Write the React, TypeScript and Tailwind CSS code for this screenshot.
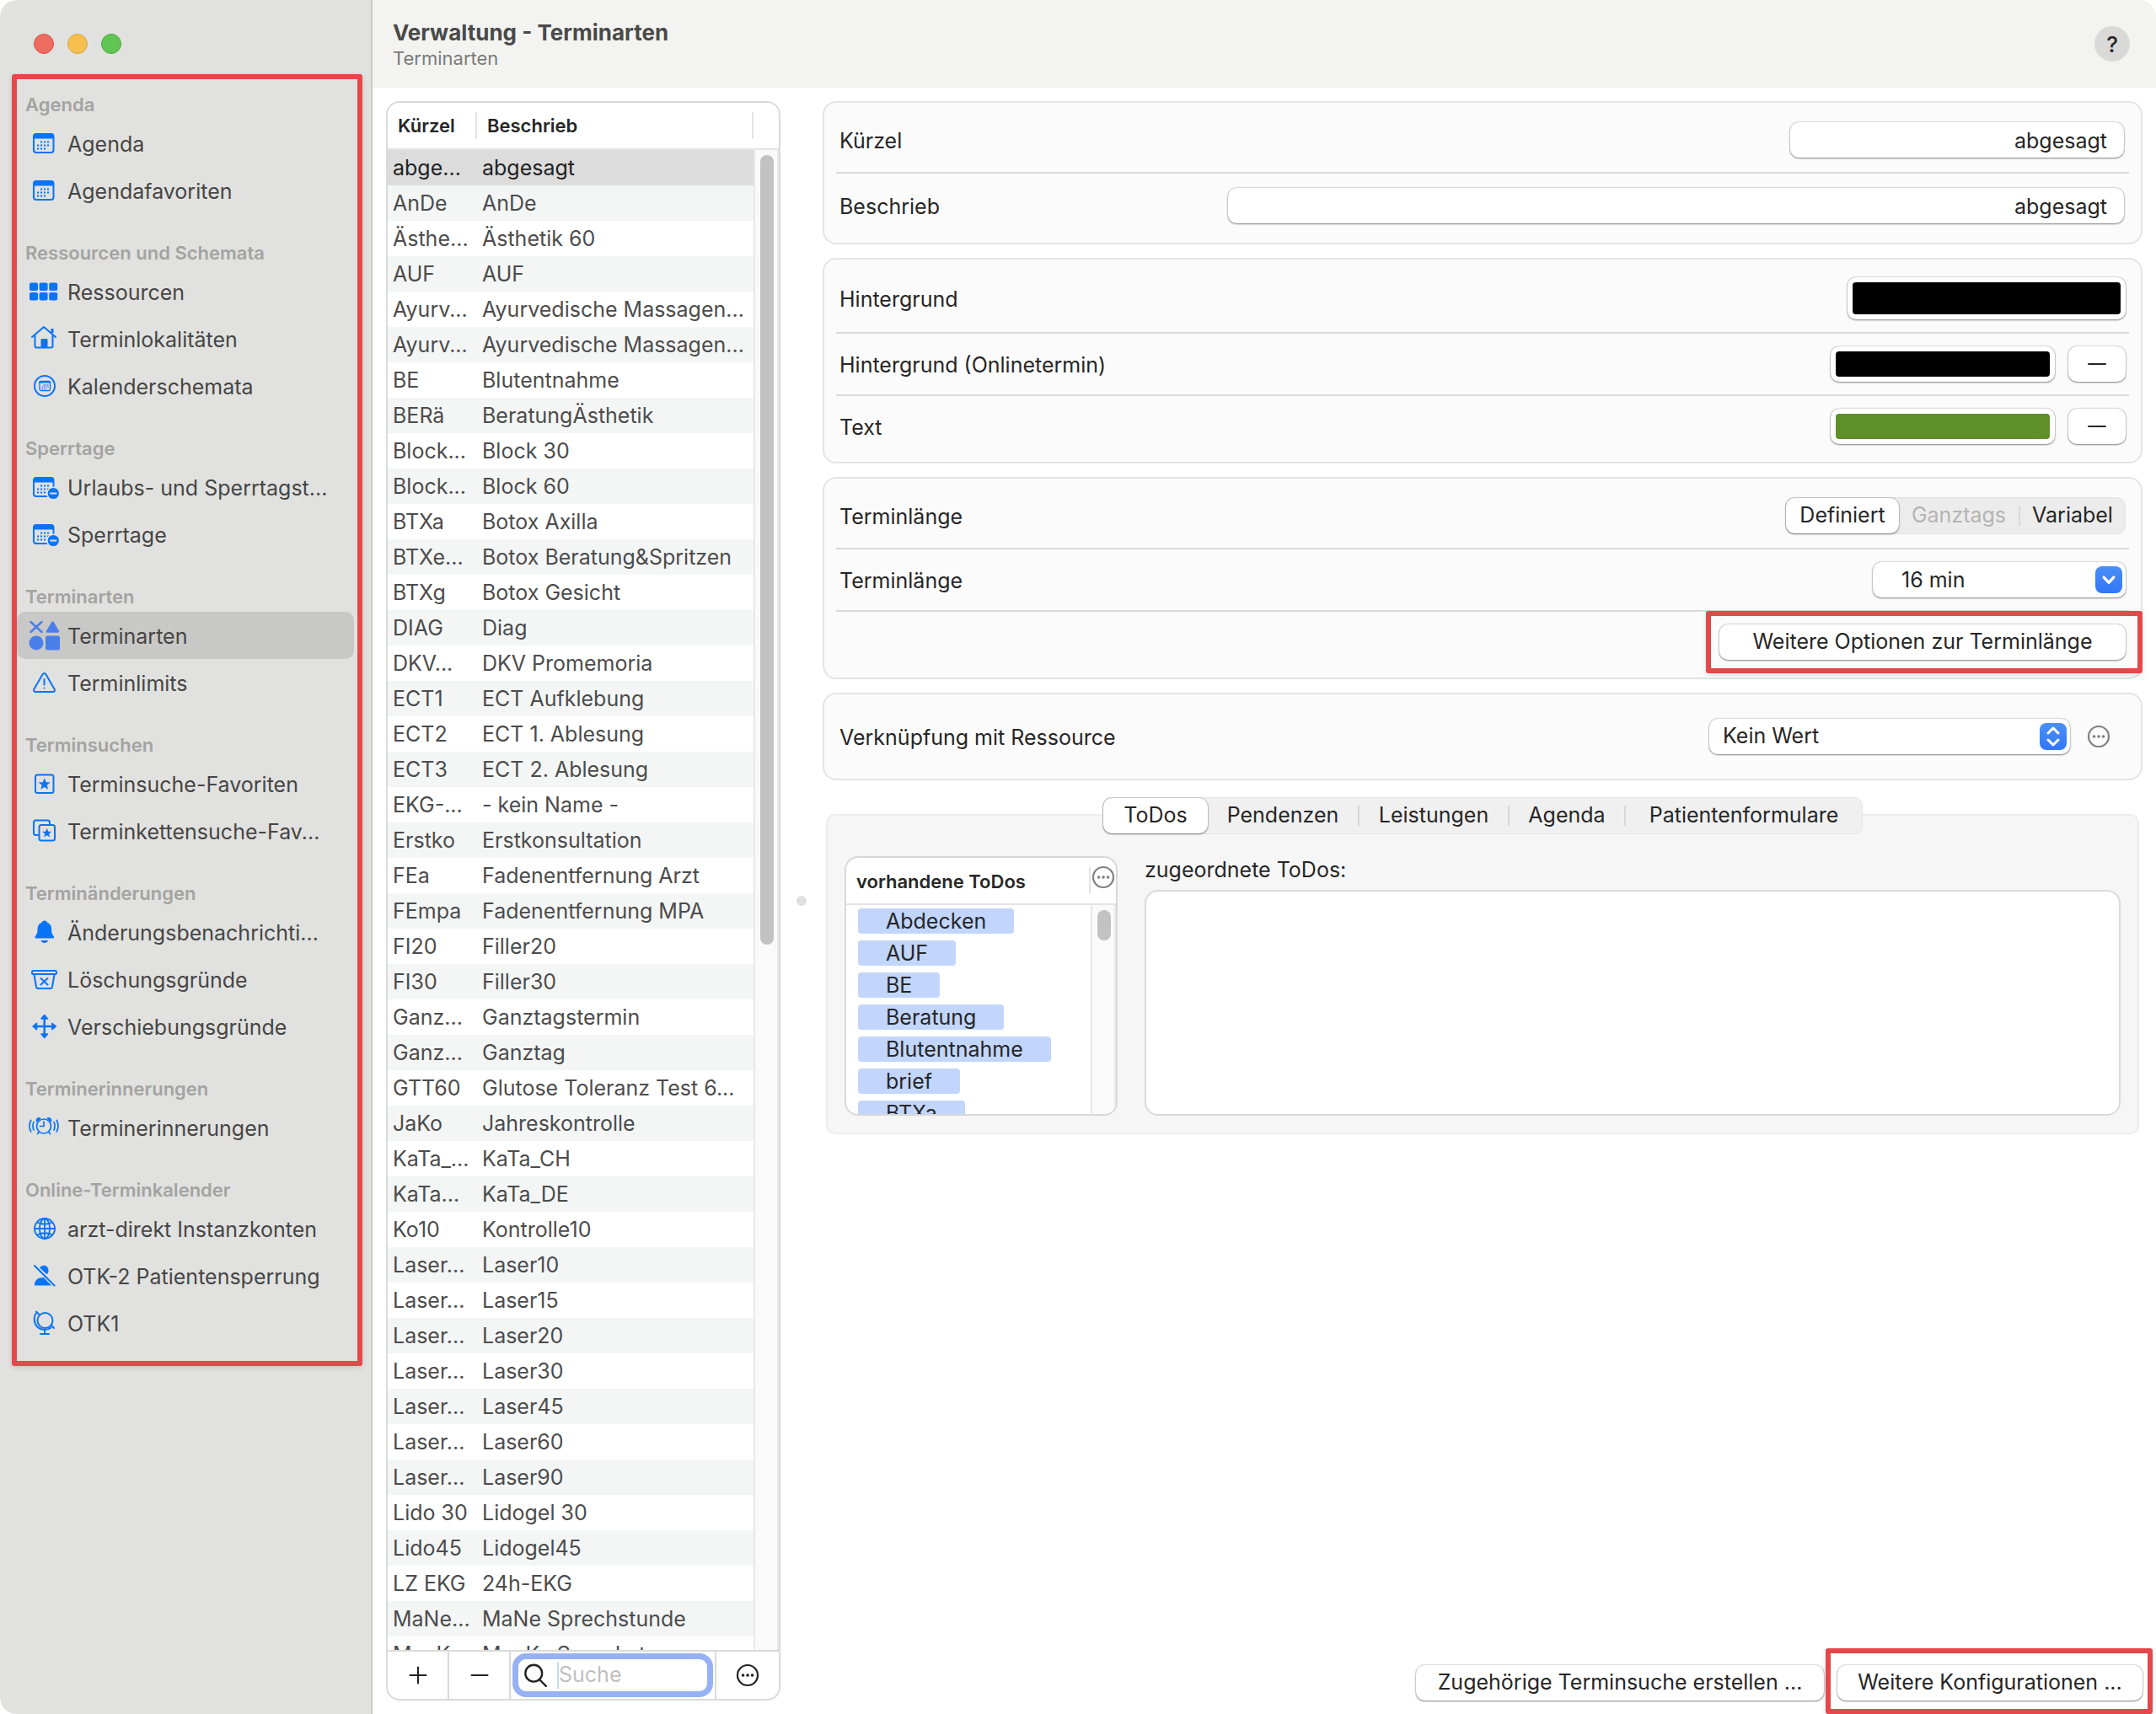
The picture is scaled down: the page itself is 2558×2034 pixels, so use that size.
import { useState, type ReactNode } from 'react'

const svgProps = {
	viewBox: '0 0 36 36',
	className: 'w-9 h-9 shrink-0',
	fill: 'none',
	stroke: 'currentColor',
	strokeWidth: 2,
	strokeLinecap: 'round',
	strokeLinejoin: 'round',
	'aria-hidden': true,
} as const

const CalendarBody = () => (
	<>
		<rect x="6" y="7" width="23.5" height="22" rx="3" />
		<path d="M6 12.5V9.5a3 3 0 0 1 3-3h17.5a3 3 0 0 1 3 3v3z" fill="currentColor" stroke="none" />
		<path d="M15 16.5h.1M19 16.5h.1M23 16.5h.1M11 20.5h.1M15 20.5h.1M19 20.5h.1M23 20.5h.1M11 24.5h.1M15 24.5h.1M19 24.5h.1" strokeWidth="2" strokeLinecap="square" />
	</>
)

const CalendarIcon = () => (
	<svg {...svgProps}>
		<CalendarBody />
	</svg>
)

const CalendarMinusIcon = () => (
	<svg {...svgProps}>
		<CalendarBody />
		<circle cx="29" cy="25.500" r="8" fill="#e1e1df" stroke="none" />
		<circle cx="29.3" cy="25.500" r="6.6" fill="currentColor" stroke="none" />
		<path d="M26 25.500h6.6" stroke="#e1e1df" />
	</svg>
)

const GridIcon = () => (
	<svg {...svgProps} fill="currentColor" stroke="none">
		<rect x="1" y="7.5" width="10" height="9.5" rx="2" />
		<rect x="12.6" y="7.5" width="10" height="9.5" rx="2" />
		<rect x="24.2" y="7.5" width="10" height="9.5" rx="2" />
		<rect x="1" y="19" width="10" height="9.5" rx="2" />
		<rect x="12.6" y="19" width="10" height="9.5" rx="2" />
		<rect x="24.2" y="19" width="10" height="9.5" rx="2" />
	</svg>
)

const HouseIcon = () => (
	<svg {...svgProps}>
		<path d="M4 16 18 4l14 12" />
		<path d="M7.5 14v12.500a2 2 0 0 0 2 2h17a2 2 0 0 0 2-2V14" />
		<path d="M28 6v5" strokeWidth="3" strokeLinecap="butt" />
		<path d="M15 28v-9.500h7V28z" fill="currentColor" strokeWidth="1" />
	</svg>
)

const CalendarCircleIcon = () => (
	<svg {...svgProps}>
		<circle cx="19" cy="18" r="12" />
		<rect x="13" y="12.500" width="12.500" height="11" rx="1.500" strokeWidth="1.300" />
		<path d="M13 13.500h12.500" />
		<path d="M17.500 17h6M15.500 19.200h8M15.500 21.300h5.500" strokeWidth="1.300" strokeDasharray="1.300 1" strokeLinecap="butt" />
	</svg>
)

const ShapesIcon = () => (
	<svg {...svgProps} className="w-9 h-9 shrink-0 overflow-visible" stroke="#4a7fea" strokeWidth="2.500">
		<path d="M2.500 2l13 12M15.500 2l-13 12" />
		<path d="M28.500 2.500l6.500 11H22z" fill="#4a7fea" />
		<circle cx="9" cy="27" r="8.500" fill="#4a7fea" stroke="none" />
		<rect x="20" y="18.500" width="17" height="17" rx="2.500" fill="#4a7fea" stroke="none" />
	</svg>
)

const WarningIcon = () => (
	<svg {...svgProps}>
		<path d="M16.700 8 6.300 26a2 2 0 0 0 1.700 3h21a2 2 0 0 0 1.700-3L20.300 8a2.100 2.100 0 0 0-3.600 0z" />
		<path d="M18.500 14v6.500M18.500 24.500v.1" />
	</svg>
)

const STAR = 'M0-7.500 1.900-2.500 7.100-2.300 3 1 4.400 6.100 0 3.200-4.400 6.100-3 1-7.100-2.300-1.900-2.500z'

const StarSquareIcon = () => (
	<svg {...svgProps}>
		<rect x="8" y="7.500" width="21.500" height="21.500" rx="2.500" />
		<path d={STAR} transform="translate(18.700 18.700)" fill="currentColor" stroke="none" />
	</svg>
)

const StarStackIcon = () => (
	<svg {...svgProps}>
		<path d="M12 23H8.500A2.500 2.500 0 0 1 6 20.500V8a2.500 2.500 0 0 1 2.500-2.500h14A2.500 2.500 0 0 1 25 8v2" />
		<rect x="12.500" y="11" width="18.500" height="18.500" rx="2.500" />
		<path d={STAR} transform="translate(21.700 20.700) scale(.8)" fill="currentColor" stroke="none" />
	</svg>
)

const BellIcon = () => (
	<svg {...svgProps} fill="currentColor" stroke="none">
		<path d="M18.800 4.500c-1.800 0-2.900 1-3.300 2.300-3.400 1.300-5 4-5 7.700 0 5-.8 6.300-2.500 8.200-.8.900-.9 2.800.8 2.800h20c1.700 0 1.600-1.900.8-2.800-1.700-1.900-2.500-3.200-2.500-8.200 0-3.700-1.600-6.400-5-7.700-.4-1.300-1.500-2.300-3.300-2.300z" />
		<path d="M14.500 28h8.600c-.5 1.700-2 2.900-4.300 2.900S15 29.700 14.500 28z" />
	</svg>
)

const BasketIcon = () => (
	<svg {...svgProps}>
		<rect x="4" y="8" width="29" height="4" rx="1.500" />
		<path d="M6.500 12.500 9 27a2.500 2.500 0 0 0 2.500 2h14A2.500 2.500 0 0 0 28 27l2.500-14.500" />
		<path d="m14.500 17 8 7.500M22.500 17l-8 7.500" />
	</svg>
)

const MoveIcon = () => (
	<svg {...svgProps}>
		<path d="M18.700 7v22M7.500 18h22.500" strokeWidth="2.500" />
		<path d="M18.700 4.500 22.500 9h-7.600zM18.700 31.500 14.900 27h7.600zM5 18l4.500-3.800v7.600zM32.400 18l-4.500-3.800v7.600z" fill="currentColor" strokeWidth="1.500" />
	</svg>
)

const AlarmIcon = () => (
	<svg {...svgProps} strokeWidth="1.700">
		<circle cx="18" cy="16.500" r="8.500" />
		<path d="M18 11v5.500h-4.500M12.500 23l-2 2.500M23.500 23l2 2.500" />
		<path d="M9.500 10.500C9 8 11 6.500 13.500 7zM26.500 10.500c.5-2.500-1.500-4-4-3.500z" fill="currentColor" />
		<path d="M6 11.500c-1.300 3-1.300 6.500 0 9.500M2.700 9.500c-2.200 4.300-2.200 9 0 13.500M30 11.500c1.300 3 1.300 6.500 0 9.500M33.300 9.500c2.200 4.300 2.200 9 0 13.500" />
	</svg>
)

const GlobeIcon = () => (
	<svg {...svgProps} strokeWidth="1.800">
		<circle cx="19" cy="18" r="12" />
		<ellipse cx="19" cy="18" rx="6" ry="12" />
		<path d="M19 6v24M7 18h24M10 10.500c5 3 13 3 18 0M10 25.500c5-3 13-3 18 0" />
	</svg>
)

const PersonSlashIcon = () => (
	<svg {...svgProps}>
		<path d="M13 8.500c3-4.500 10-3 10.500 2.500.1 2.300-.5 4-1.800 5.300zM7 29.500c-.2-6.500 4-9.500 11-9.500l9 9.500z" fill="currentColor" stroke="none" />
		<path d="M7 6l23.500 23.500" />
	</svg>
)

const DeskGlobeIcon = () => (
	<svg {...svgProps}>
		<circle cx="19.500" cy="15" r="9" />
		<path d="M9.500 5.500c-4 5-3.500 12.500.5 16.700s11.500 5 16.500 1.300M9 4.500l3 3M27 20.500l3 3.500M19 26.500V31M14 31h10" />
	</svg>
)

const EllipsisCircleIcon = ({ className }: { className: string }) => (
	<svg viewBox="0 0 28 28" className={className} fill="none" stroke="currentColor" strokeWidth="2.200" aria-hidden>
		<circle cx="14" cy="14" r="12" />
		<path d="M8.500 14h.1M14 14h.1M19.500 14h.1" strokeWidth="3.600" strokeLinecap="round" />
	</svg>
)

const LineIcon = ({ d, className }: { d: string; className: string }) => (
	<svg viewBox="0 0 24 24" className={className} fill="none" stroke="currentColor" strokeWidth="2" strokeLinecap="round" strokeLinejoin="round" aria-hidden>
		<path d={d} />
	</svg>
)

const navGroups = [
	{
		title: 'Agenda',
		items: [
			{ label: 'Agenda', icon: <CalendarIcon /> },
			{ label: 'Agendafavoriten', icon: <CalendarIcon /> },
		],
	},
	{
		title: 'Ressourcen und Schemata',
		items: [
			{ label: 'Ressourcen', icon: <GridIcon /> },
			{ label: 'Terminlokalitäten', icon: <HouseIcon /> },
			{ label: 'Kalenderschemata', icon: <CalendarCircleIcon /> },
		],
	},
	{
		title: 'Sperrtage',
		items: [
			{ label: 'Urlaubs- und Sperrtagst...', icon: <CalendarMinusIcon /> },
			{ label: 'Sperrtage', icon: <CalendarMinusIcon /> },
		],
	},
	{
		title: 'Terminarten',
		items: [
			{ label: 'Terminarten', icon: <ShapesIcon />, selected: true },
			{ label: 'Terminlimits', icon: <WarningIcon /> },
		],
	},
	{
		title: 'Terminsuchen',
		items: [
			{ label: 'Terminsuche-Favoriten', icon: <StarSquareIcon /> },
			{ label: 'Terminkettensuche-Fav...', icon: <StarStackIcon /> },
		],
	},
	{
		title: 'Terminänderungen',
		items: [
			{ label: 'Änderungsbenachrichti...', icon: <BellIcon /> },
			{ label: 'Löschungsgründe', icon: <BasketIcon /> },
			{ label: 'Verschiebungsgründe', icon: <MoveIcon /> },
		],
	},
	{
		title: 'Terminerinnerungen',
		items: [{ label: 'Terminerinnerungen', icon: <AlarmIcon /> }],
	},
	{
		title: 'Online-Terminkalender',
		items: [
			{ label: 'arzt-direkt Instanzkonten', icon: <GlobeIcon /> },
			{ label: 'OTK-2 Patientensperrung', icon: <PersonSlashIcon /> },
			{ label: 'OTK1', icon: <DeskGlobeIcon /> },
		],
	},
]

const rows = [
	['abge...', 'abgesagt'],
	['AnDe', 'AnDe'],
	['Ästhe...', 'Ästhetik 60'],
	['AUF', 'AUF'],
	['Ayurv...', 'Ayurvedische Massagen...'],
	['Ayurv...', 'Ayurvedische Massagen...'],
	['BE', 'Blutentnahme'],
	['BERä', 'BeratungÄsthetik'],
	['Block...', 'Block 30'],
	['Block...', 'Block 60'],
	['BTXa', 'Botox Axilla'],
	['BTXe...', 'Botox Beratung&Spritzen'],
	['BTXg', 'Botox Gesicht'],
	['DIAG', 'Diag'],
	['DKV...', 'DKV Promemoria'],
	['ECT1', 'ECT Aufklebung'],
	['ECT2', 'ECT 1. Ablesung'],
	['ECT3', 'ECT 2. Ablesung'],
	['EKG-...', '- kein Name -'],
	['Erstko', 'Erstkonsultation'],
	['FEa', 'Fadenentfernung Arzt'],
	['FEmpa', 'Fadenentfernung MPA'],
	['FI20', 'Filler20'],
	['FI30', 'Filler30'],
	['Ganz...', 'Ganztagstermin'],
	['Ganz...', 'Ganztag'],
	['GTT60', 'Glutose Toleranz Test 6...'],
	['JaKo', 'Jahreskontrolle'],
	['KaTa_...', 'KaTa_CH'],
	['KaTa...', 'KaTa_DE'],
	['Ko10', 'Kontrolle10'],
	['Laser...', 'Laser10'],
	['Laser...', 'Laser15'],
	['Laser...', 'Laser20'],
	['Laser...', 'Laser30'],
	['Laser...', 'Laser45'],
	['Laser...', 'Laser60'],
	['Laser...', 'Laser90'],
	['Lido 30', 'Lidogel 30'],
	['Lido45', 'Lidogel45'],
	['LZ EKG', '24h-EKG'],
	['MaNe...', 'MaNe Sprechstunde'],
	['ManK...', 'ManKe Sprechst.'],
]

const todos = ['Abdecken', 'AUF', 'BE', 'Beratung', 'Blutentnahme', 'brief', 'BTXa']

const tabs = [
	{ label: 'ToDos', className: 'w-[124px]' },
	{ label: 'Pendenzen', className: 'w-[180px]' },
	{ label: 'Leistungen', className: 'w-[178px]' },
	{ label: 'Agenda', className: 'w-[138px]' },
	{ label: 'Patientenformulare', className: 'w-[280px]' },
]

const control = 'h-[42px] rounded-[10px] bg-white shadow-[0_0_2px_rgba(0,0,0,0.4),0_1px_2px_rgba(0,0,0,0.4)]'

const highlight = 'border-[6px] border-[#e5484a] rounded-[3px] shadow-[0_2px_6px_rgba(0,0,0,0.12)]'

const Panel = ({ children }: { children: ReactNode }) => (
	<section className="rounded-2xl border-2 border-[#e4e4e4] bg-[#fbfbfb] px-3.5 py-1.5 divide-y-2 divide-[#dadada]">{children}</section>
)

const Row = ({ label, htmlFor, className, children }: { label?: string; htmlFor?: string; className: string; children: ReactNode }) => (
	<div className={`flex items-center justify-between box-content px-1 ${className}`}>
		{label ? <label htmlFor={htmlFor} className="pt-1">{label}</label> : <span />}
		{children}
	</div>
)

const MinusButton = ({ label }: { label: string }) => (
	<button type="button" aria-label={label} className={`${control} w-[68px] flex items-center justify-center`}>
		<LineIcon d="M2 12h20" className="w-6 h-6" />
	</button>
)

const colorWell = `${control} block p-1.5 cursor-pointer [&::-webkit-color-swatch-wrapper]:p-0 [&::-webkit-color-swatch]:rounded-[4px] [&::-webkit-color-swatch]:border-0`

const Sidebar = () => (
	<aside className="w-[442px] shrink-0 bg-[#e1e1df] border-r-2 border-[#cacac9] rounded-l-[20px]">
		<div className="h-22 flex items-center gap-4 pl-10 pt-4">
			<button type="button" aria-label="Schliessen" className="w-6 h-6 rounded-full bg-[#ed6b5f] border border-[#d8564b]" />
			<button type="button" aria-label="Minimieren" className="w-6 h-6 rounded-full bg-[#f5bf4f] border border-[#dba63c]" />
			<button type="button" aria-label="Zoomen" className="w-6 h-6 rounded-full bg-[#61c554] border border-[#4dab41]" />
		</div>
		<nav className={`${highlight} ml-3.5 mr-2.5 pt-3 pb-[17px] flex flex-col gap-7`}>
			{navGroups.map((group) => (
				<div key={group.title}>
					<h2 className="h-9 pl-2.5 flex items-center text-[22px] font-semibold text-[#a3a3a1]">{group.title}</h2>
					<ul>
						{group.items.map((item) => (
							<li key={item.label} className="pr-1">
								<a
									href="#"
									className={`h-14 pl-3.5 flex items-center gap-2.5 rounded-[10px] text-[25px] text-[#464645] whitespace-nowrap ${'selected' in item ? 'bg-[#c8c8c7]' : ''}`}
								>
									<span className="text-[#0a74f8]">{item.icon}</span>
									<span className="pt-1">{item.label}</span>
								</a>
							</li>
						))}
					</ul>
				</div>
			))}
		</nav>
	</aside>
)

const TypeList = () => (
	<section className="w-[468px] shrink-0 flex flex-col rounded-2xl border-2 border-[#dadada] bg-white overflow-hidden">
		<div className="flex-1 min-h-0 flex">
			<div className="flex-1 overflow-hidden">
				<table className="w-full table-fixed border-separate border-spacing-0 text-left text-[25px] text-[#4c4c4c]">
					<thead>
						<tr className="text-[22px] text-[#262626]">
							<th className="w-[106px] h-[54px] box-content border-b-2 border-[#e4e4e4] p-0 font-semibold">
								<div className="h-8 leading-8 pl-3 border-r-2 border-[#e4e4e4]">Kürzel</div>
							</th>
							<th className="border-b-2 border-[#e4e4e4] p-0 font-semibold">
								<div className="h-8 leading-8 pl-3 border-r-2 border-[#e4e4e4]">Beschrieb</div>
							</th>
						</tr>
					</thead>
					<tbody>
						{rows.map(([code, name], index) => (
							<tr key={index} className={index === 0 ? 'bg-[#dcdcdc] text-[#222222]' : 'even:bg-[#f4f6f6]'}>
								<td className="h-[42px] p-0 pl-1.5 leading-[42px] whitespace-nowrap">{code}</td>
								<td className="h-[42px] p-0 pl-1.5 leading-[42px] whitespace-nowrap">{name}</td>
							</tr>
						))}
					</tbody>
				</table>
			</div>
			<div className="w-[30px] flex flex-col">
				<div className="h-[56px] border-b-2 border-[#e4e4e4]" />
				<div className="flex-1 border-x-2 border-[#e8e8e8] bg-[#fafafa] px-1.5 py-1.5">
					<div className="w-4 h-[53%] rounded-full bg-[#c2c2c2]" />
				</div>
			</div>
		</div>
		<div className="h-[58px] border-t-2 border-[#dadada] flex divide-x-2 divide-[#dadada] text-[#222222]">
			<button type="button" aria-label="Hinzufügen" className="w-[73px] flex items-center justify-center">
				<LineIcon d="M12 2.500v19M2.500 12h19" className="w-6 h-6" />
			</button>
			<button type="button" aria-label="Entfernen" className="w-[73px] flex items-center justify-center">
				<LineIcon d="M2.500 12h19" className="w-6 h-6" />
			</button>
			<div className="flex-1 p-0.5">
				<label className="h-[52px] flex items-center gap-3 rounded-2xl border-[7px] border-[#96b2f5] pl-1.5">
					<LineIcon d="M10.500 18.500a8.500 8.500 0 1 0 0-17 8.500 8.500 0 0 0 0 17zM16.500 16.500l6.500 6.500" className="w-7 h-7 shrink-0" />
					<input type="search" placeholder="Suche" aria-label="Suche" className="w-full min-w-0 h-8 border-l-2 border-[#c3d8fb] text-[25px] outline-none placeholder:text-[#bfbfbf]" />
				</label>
			</div>
			<button type="button" aria-label="Weitere Aktionen" className="w-[74px] flex items-center justify-center">
				<EllipsisCircleIcon className="w-7 h-7" />
			</button>
		</div>
	</section>
)

const TodoTab = () => (
	<div className="rounded-[10px] border-2 border-[#ececec] bg-[#f6f6f6] pt-12 px-5 pb-5 flex gap-8">
		<div className="w-[324px] h-[308px] shrink-0 flex flex-col rounded-2xl border-2 border-[#d8d8d8] bg-white overflow-hidden">
			<div className="h-[56px] shrink-0 border-b-2 border-[#e4e4e4] flex items-center">
				<h3 className="flex-1 pl-3 pt-0.5 text-[22px] font-semibold">vorhandene ToDos</h3>
				<div className="h-8 border-l-2 border-[#e4e4e4]" />
				<button type="button" aria-label="ToDo-Aktionen" className="w-[30px] h-9 flex justify-center text-[#808080]">
					<EllipsisCircleIcon className="w-7 h-7" />
				</button>
			</div>
			<div className="flex-1 min-h-0 flex">
				<ul className="flex-1 pl-3.5 pt-1 flex flex-col items-start gap-2">
					{todos.map((todo) => (
						<li key={todo} className="h-[30px] shrink-0 px-[33px] leading-[30px] rounded-[4px] bg-[#c2d6fd] text-[25px]">{todo}</li>
					))}
				</ul>
				<div className="w-[30px] border-x-2 border-[#e8e8e8] bg-[#fafafa] px-1.5 py-1.5">
					<div className="w-4 h-9 rounded-full bg-[#c2c2c2]" />
				</div>
			</div>
		</div>
		<div className="flex-1 flex flex-col">
			<h3 className="h-10 leading-8">zugeordnete ToDos:</h3>
			<div className="flex-1 rounded-2xl border-2 border-[#dadada] bg-white" />
		</div>
	</div>
)

const Details = () => {
	const [code, setCode] = useState('abgesagt')
	const [description, setDescription] = useState('abgesagt')
	const [activeTab, setActiveTab] = useState('ToDos')

	return (
		<div className="flex-1 min-w-0 flex flex-col gap-4 text-[25px] text-[#262626]">
			<Panel>
				<Row label="Kürzel" htmlFor="code" className="h-[76px]">
					<input id="code" value={code} onChange={(e) => setCode(e.target.value)} className={`${control} w-[396px] mr-0.5 px-5 pt-0.5 text-right outline-none`} />
				</Row>
				<Row label="Beschrieb" htmlFor="description" className="h-[76px]">
					<input id="description" value={description} onChange={(e) => setDescription(e.target.value)} className={`${control} w-[1063px] mr-0.5 px-5 pt-0.5 text-right outline-none`} />
				</Row>
			</Panel>
			<Panel>
				<Row label="Hintergrund" htmlFor="background" className="h-20">
					<input id="background" type="color" defaultValue="#000000" className={`${colorWell} h-[50px] w-[330px]`} />
				</Row>
				<Row label="Hintergrund (Onlinetermin)" htmlFor="background-online" className="h-[72px]">
					<div className="flex gap-4">
						<input id="background-online" type="color" defaultValue="#000000" className={`${colorWell} w-[266px]`} />
						<MinusButton label="Hintergrund (Onlinetermin) entfernen" />
					</div>
				</Row>
				<Row label="Text" htmlFor="text-color" className="h-[72px]">
					<div className="flex gap-4">
						<input id="text-color" type="color" defaultValue="#5f8f28" className={`${colorWell} w-[266px]`} />
						<MinusButton label="Text entfernen" />
					</div>
				</Row>
			</Panel>
			<Panel>
				<Row label="Terminlänge" className="h-[76px]">
					<div className="h-11 flex items-center rounded-[10px] border border-[#e2e2e2] bg-[#ececec]">
						<button type="button" className={`${control} w-[134px]`}>Definiert</button>
						<button type="button" disabled className="w-[142px] text-[#b4b4b4]">Ganztags</button>
						<div className="w-0.5 h-6 bg-[#d8d8d8]" />
						<button type="button" className="w-[124px]">Variabel</button>
					</div>
				</Row>
				<Row label="Terminlänge" htmlFor="length" className="h-[72px]">
					<div className="relative">
						<select id="length" className={`${control} w-[300px] pl-[34px] pt-0.5 appearance-none outline-none`}>
							<option>16 min</option>
						</select>
						<span className="absolute right-1 top-[5px] w-8 h-8 flex items-center justify-center rounded-lg bg-linear-to-b from-[#4a8ff8] to-[#3176f7] text-white pointer-events-none">
							<LineIcon d="M5 8.500l7 7.500 7-7.500" className="w-5 h-5 stroke-4" />
						</span>
					</div>
				</Row>
				<Row className="h-[72px]">
					<div className="relative">
						<button type="button" className={`${control} block w-[482px]`}>Weitere Optionen zur Terminlänge</button>
						<div className={`${highlight} absolute -left-4 -right-5 -top-4 -bottom-4 pointer-events-none`} />
					</div>
				</Row>
			</Panel>
			<Panel>
				<Row label="Verknüpfung mit Ressource" htmlFor="resource" className="h-[88px]">
					<div className="flex items-center gap-5 pr-[18px]">
						<div className="relative">
							<select id="resource" className={`${control} w-[428px] pl-4 appearance-none outline-none`}>
								<option>Kein Wert</option>
							</select>
							<span className="absolute right-1 top-[5px] w-8 h-8 flex items-center justify-center rounded-lg bg-linear-to-b from-[#4a8ff8] to-[#3176f7] text-white pointer-events-none">
								<LineIcon d="M6 8l6-6 6 6M6 16l6 6 6-6" className="w-6 h-6 stroke-3" />
							</span>
						</div>
						<button type="button" aria-label="Ressourcen-Aktionen" className="text-[#808080]">
							<EllipsisCircleIcon className="w-7 h-7" />
						</button>
					</div>
				</Row>
			</Panel>
			<div className="mt-1 mx-1 flex flex-col">
				<div role="tablist" className="relative z-10 self-center -mb-6 h-11 flex items-center rounded-[10px] border border-[#e6e6e6] bg-[#f0f0f0]">
					{tabs.map((tab, index) => (
						<div key={tab.label} className={`${tab.className} flex items-center`}>
							<button
								type="button"
								role="tab"
								aria-selected={tab.label === activeTab}
								onClick={() => setActiveTab(tab.label)}
								className={`flex-1 ${tab.label === activeTab ? control : 'h-[42px]'}`}
							>
								{tab.label}
							</button>
							{index > 0 && index < tabs.length - 1 && <div className="w-0.5 h-6 bg-[#d8d8d8]" />}
						</div>
					))}
				</div>
				<TodoTab />
			</div>
			<div className="mt-auto flex justify-end gap-4">
				<button type="button" className={`${control} w-[484px]`}>Zugehörige Terminsuche erstellen ...</button>
				<div className="relative">
					<button type="button" className={`${control} block w-[362px]`}>Weitere Konfigurationen ...</button>
					<div className={`${highlight} absolute -left-3.5 -right-3 -top-5 -bottom-4 pointer-events-none`} />
				</div>
			</div>
		</div>
	)
}

const App = () => (
	<div className="h-screen w-full flex bg-white font-['Inter','Liberation_Sans',sans-serif] overflow-hidden">
		<Sidebar />
		<main className="flex-1 min-w-0 flex flex-col">
			<header className="h-26 shrink-0 flex items-center justify-between bg-[#f3f3f1] pl-6 pr-[31px] rounded-tr-[20px]">
				<div className="pt-0.5">
					<h1 className="text-[26px] leading-8 font-bold text-[#4a4a48]">Verwaltung - Terminarten</h1>
					<p className="text-[22px] leading-7 text-[#7b7b79]">Terminarten</p>
				</div>
				<button type="button" aria-label="Hilfe" className="w-[42px] h-[42px] rounded-full bg-[#d9d9d8] text-[26px] font-medium text-[#262626]">?</button>
			</header>
			<div className="flex-1 min-h-0 flex p-4">
				<TypeList />
				<div className="w-[50px] shrink-0 flex items-center justify-center">
					<div className="w-3 h-3 rounded-full bg-[#e0e0e0]" />
				</div>
				<Details />
			</div>
		</main>
	</div>
)

export default App
